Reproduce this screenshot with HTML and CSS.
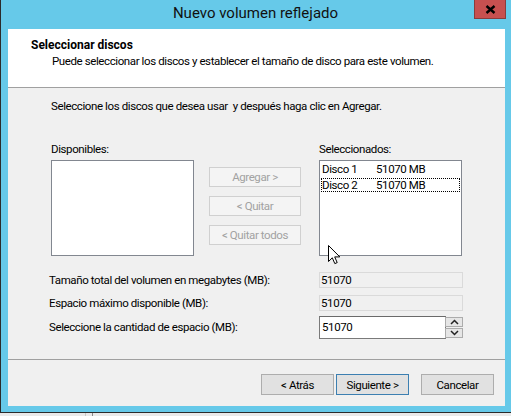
FILE: index.html
```html
<!DOCTYPE html>
<html lang="es">
<head>
<meta charset="utf-8">
<title>Nuevo volumen reflejado</title>
<link rel="stylesheet" href="styles.css">
</head>
<body>
<div class="window">
  <div class="titlebar">
    <span class="title">Nuevo volumen reflejado</span>
    <div class="close"><svg width="11" height="9" viewBox="0 0 11 9"><path d="M1.5 1 L9.5 8 M9.5 1 L1.5 8" stroke="#000" stroke-width="2.4" fill="none"/></svg></div>
  </div>
  <div class="client">
    <div class="header">
      <div class="h-title">Seleccionar discos</div>
      <div class="h-sub">Puede seleccionar los discos y establecer el tamaño de disco para este volumen.</div>
    </div>
    <div class="content">
      <div class="instr">Seleccione los discos que desea usar&nbsp; y después haga clic en Agregar.</div>
      <div class="pick">
        <div class="col">
          <div class="lbl">Disponibles:</div>
          <div class="listbox"></div>
        </div>
        <div class="mid">
          <div class="btn disabled">Agregar &gt;</div>
          <div class="btn disabled">&lt; Quitar</div>
          <div class="btn disabled">&lt; Quitar todos</div>
        </div>
        <div class="col col-right">
          <div class="lbl">Seleccionados:</div>
          <div class="listbox">
            <div class="item"><span class="i-name">Disco 1</span><span>51070 MB</span></div>
            <div class="item focus"><span class="i-name">Disco 2</span><span>51070 MB</span></div>
          </div>
        </div>
      </div>
      <div class="fields">
        <div class="row r1"><span class="f-lbl">Tamaño total del volumen en megabytes (MB):</span><span class="ro">51070</span></div>
        <div class="row r2"><span class="f-lbl">Espacio máximo disponible (MB):</span><span class="ro">51070</span></div>
        <div class="row r3"><span class="f-lbl">Seleccione la cantidad de espacio (MB):</span>
          <div class="spinbox">
            <span class="edit">51070</span>
            <div class="spin">
              <div class="sb"><svg width="9" height="6" viewBox="0 0 9 6"><path d="M1 5 L4.5 1.5 L8 5" stroke="#222" stroke-width="1.5" fill="none"/></svg></div>
              <div class="sb"><svg width="9" height="6" viewBox="0 0 9 6"><path d="M1 1 L4.5 4.5 L8 1" stroke="#222" stroke-width="1.5" fill="none"/></svg></div>
            </div>
          </div>
        </div>
      </div>
    </div>
    <div class="footer">
      <div class="btn wbtn">&lt; Atrás</div>
      <div class="btn wbtn default">Siguiente &gt;</div>
      <div class="btn wbtn cancel">Cancelar</div>
    </div>
  </div>
</div>
<div class="desktop"><span class="d1"></span><span class="d2"></span></div>
<svg class="cursor" width="13" height="21" viewBox="0 0 13 21"><path d="M0.5 0.5 L0.5 16.5 L4.3 12.8 L6.8 18.6 L9.2 17.6 L6.7 11.9 L11.8 11.9 Z" fill="#fff" stroke="#000" stroke-width="1" stroke-linejoin="miter"/></svg>
</body>
</html>
```
FILE: styles.css
```css
html, body {
  margin: 0;
  padding: 0;
}
body {
  width: 511px;
  height: 416px;
  overflow: hidden;
  position: relative;
  background: #ececec;
  font-family: Roboto, "Liberation Sans", sans-serif;
  font-size: 11.5px;
  letter-spacing: -0.4px;
  color: #000;
}
.window {
  width: 510px;
  height: 412px;
  background: #66c9e9;
  border-left: 1px solid #2b2b2b;
  border-bottom: 1px solid #2b2b2b;
  display: flex;
  flex-direction: column;
}
.titlebar {
  height: 29px;
  position: relative;
  flex: none;
}
.title {
  display: block;
  text-align: center;
  font-size: 15px;
  letter-spacing: 0;
  line-height: 27px;
  color: #111;
  padding-right: 1px;
}
.close {
  position: absolute;
  top: 0;
  right: 5px;
  width: 30px;
  height: 18px;
  background: #c75050;
  border: 1px solid #8a3c3c;
  border-top: none;
  display: flex;
  align-items: center;
  justify-content: center;
}
.client {
  margin-left: 7px;
  width: 497px;
  height: 377px;
  background: #f0f0f0;
  display: flex;
  flex-direction: column;
}
.header {
  background: #fff;
  border-bottom: 1px solid #a0a0a0;
  padding-top: 9px;
  box-sizing: content-box;
  height: 49px;
  line-height: 15px;
}
.h-title {
  padding-left: 23px;
  font-weight: bold;
  font-size: 12px;
  letter-spacing: 0;
}
.h-sub {
  padding-left: 44px;
  margin-top: 1px;
}
.content {
  height: 271px;
  padding-left: 43px;
  padding-top: 11px;
  box-sizing: border-box;
  line-height: 15px;
}
.instr {
  height: 15px;
}
.pick {
  margin-top: 28px;
  display: flex;
}
.col {
  width: 143px;
}
.col-right {
  margin-left: 18px;
}
.lbl {
  height: 15px;
  margin-bottom: 3px;
}
.listbox {
  height: 96px;
  box-sizing: border-box;
  background: #fff;
  border: 1px solid #828790;
  padding: 1px 1px 0;
}
.item {
  height: 15px;
  line-height: 15px;
  padding-left: 1px;
  display: flex;
}
.i-name {
  width: 54px;
}
.item.focus {
  outline: 1px dotted #000;
  outline-offset: -1px;
  height: 14px;
  margin-top: 1px;
}
.mid {
  margin-left: 15px;
  width: 92px;
  padding-top: 25px;
  display: flex;
  flex-direction: column;
  gap: 9px;
}
.btn {
  height: 20px;
  box-sizing: border-box;
  display: flex;
  align-items: center;
  justify-content: center;
  background: #e1e1e1;
  border: 1px solid #adadad;
}
.btn.disabled {
  background: #f4f4f4;
  border-color: #d0d0d0;
  color: #a2a2a2;
}
.fields {
  margin-top: 16px;
  margin-left: -2px;
}
.row {
  display: flex;
  align-items: center;
}
.f-lbl {
  width: 270px;
}
.r1 { height: 16px; }
.r2 { height: 16px; margin-top: 7px; }
.r3 { height: 23px; margin-top: 5px; }
.ro {
  width: 144px;
  height: 16px;
  box-sizing: border-box;
  border: 1px solid #dadada;
  background: #f0f0f0;
  line-height: 14px;
  padding-left: 1px;
}
.spinbox {
  display: flex;
  width: 144px;
  height: 23px;
}
.edit {
  width: 127px;
  box-sizing: border-box;
  border: 1px solid #7a7a7a;
  border-top-color: #6a6a6a;
  background: #fff;
  padding-left: 2px;
  line-height: 20px;
}
.spin {
  width: 18px;
  margin-left: -1px;
  padding-top: 1px;
  display: flex;
  flex-direction: column;
  gap: 1px;
}
.sb {
  height: 10px;
  box-sizing: border-box;
  background: #e6e6e6;
  border: 1px solid #acacac;
  display: flex;
  align-items: center;
  justify-content: center;
}
.sb svg { display: block; }
.footer {
  flex: 1;
  border-top: 1px solid #a0a0a0;
  display: flex;
  justify-content: flex-end;
  align-items: flex-start;
  padding-top: 14px;
  padding-right: 11px;
  gap: 2px;
}
.wbtn {
  width: 73px;
  height: 21px;
}
.wbtn.default {
  border-color: #3c7fb1;
}
.wbtn.cancel {
  margin-left: 10px;
}
.desktop {
  height: 3px;
  position: relative;
  background: #e9e9e9;
}
.d1, .d2 {
  position: absolute;
  top: 0;
  width: 1px;
  height: 3px;
  background: #c8c8c8;
}
.d1 { left: 85px; }
.d2 { left: 92px; background: #8a8a8a; }
.cursor {
  position: absolute;
  left: 328px;
  top: 245px;
}
```
